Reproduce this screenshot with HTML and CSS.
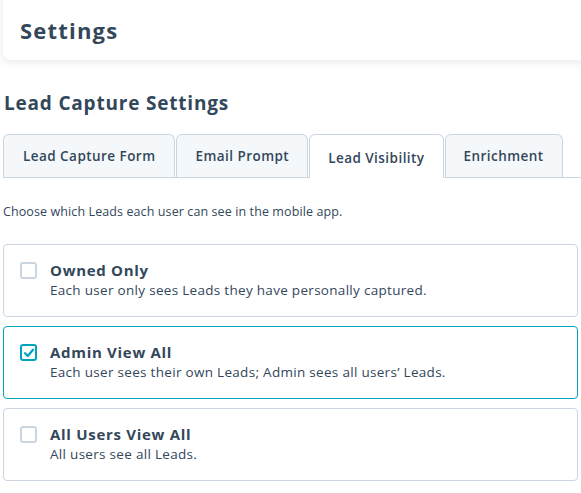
FILE: index.html
```html
<!DOCTYPE html>
<html>
  <head>
    <title>Settings</title>
    <link rel="stylesheet" href="styles.css">
  </head>
  <body>
    <div class="page">
      <header class="page-header">
        <h1>Settings</h1>
      </header>

      <h2 class="section-title">Lead Capture Settings</h2>

      <!-- Tabs -->
      <nav class="tabs">
        <button class="tab">Lead Capture Form</button>
        <button class="tab">Email Prompt</button>
        <button class="tab active">Lead Visibility</button>
        <button class="tab">Enrichment</button>
      </nav>

      <p class="intro">Choose which Leads each user can see in the mobile app.</p>

      <div class="options">
        <label class="option">
          <span class="checkbox"></span>
          <span class="option-text">
            <span class="option-title">Owned Only</span>
            <span class="option-desc">Each user only sees Leads they have personally captured.</span>
          </span>
        </label>
        <label class="option selected">
          <span class="checkbox">
            <svg viewBox="0 0 12 12" width="12" height="12">
              <path d="M2 6.2 L4.8 9 L10 2.8" fill="none" stroke="#00a4bd" stroke-width="2.3" stroke-linecap="round" stroke-linejoin="round" />
            </svg>
          </span>
          <span class="option-text">
            <span class="option-title">Admin View All</span>
            <span class="option-desc">Each user sees their own Leads; Admin sees all users’ Leads.</span>
          </span>
        </label>
        <label class="option">
          <span class="checkbox"></span>
          <span class="option-text">
            <span class="option-title">All Users View All</span>
            <span class="option-desc">All users see all Leads.</span>
          </span>
        </label>
      </div>
    </div>
  </body>
</html>
```

FILE: styles.css
```css
body {
  margin: 0;
  font-family: "Open Sans", "Liberation Sans", sans-serif;
  color: #33475b;
  background: #fff;
  overflow: hidden;
}
.page {
  padding: 0 3px;
}
.page-header {
  background: #fff;
  margin-top: -10px;
  margin-right: -20px;
  height: 70px;
  border-radius: 0 0 0 8px;
  box-shadow: 0 2px 8px rgba(45, 62, 80, 0.12);
  display: flex;
  align-items: flex-end;
  padding: 0 17px 17px;
  box-sizing: border-box;
}
.page-header h1 {
  margin: 0;
  font-size: 22px;
  font-weight: 700;
  line-height: 26px;
  letter-spacing: 1.2px;
}
.section-title {
  margin: 31px 0 0 1px;
  font-size: 19px;
  font-weight: 700;
  line-height: 24px;
  letter-spacing: 0.8px;
}
.tabs {
  display: flex;
  margin: 19px -3px 0 0;
  border-bottom: 1px solid #cbd6e2;
  height: 43px;
}
.tab {
  font-family: inherit;
  font-size: 13.5px;
  font-weight: 600;
  letter-spacing: 0.45px;
  color: #33475b;
  background: #f5f8fa;
  border: 1px solid #cbd6e2;
  border-bottom: none;
  border-radius: 6px 6px 0 0;
  padding: 0 18px;
  height: 43px;
  cursor: pointer;
}
.tab:first-child {
  padding: 0 19px;
}
.tab + .tab {
  margin-left: 1px;
}
.tab.active {
  background: #fff;
  height: 44px;
  padding-top: 2px;
}
.intro {
  margin: 25px 0 0;
  font-size: 12.5px;
  line-height: 18px;
  letter-spacing: 0.1px;
}
.options {
  margin-top: 23px;
  display: flex;
  flex-direction: column;
  gap: 9px;
}
.option {
  display: flex;
  align-items: flex-start;
  gap: 13px;
  border: 1px solid #cbd6e2;
  border-radius: 4px;
  padding: 15px 16px 0;
  height: 73px;
  box-sizing: border-box;
  cursor: pointer;
}
.option.selected {
  border-color: #00a4bd;
}
.checkbox {
  width: 17px;
  height: 17px;
  border: 2px solid #cbd6e2;
  border-radius: 3px;
  box-sizing: border-box;
  margin-top: 2px;
  display: flex;
  align-items: center;
  justify-content: center;
  flex-shrink: 0;
}
.selected .checkbox {
  border-color: #00a4bd;
}
.option-text {
  display: flex;
  flex-direction: column;
}
.option-title {
  font-size: 15px;
  font-weight: 700;
  line-height: 20px;
  letter-spacing: 0.7px;
}
.option-desc {
  font-size: 13.5px;
  line-height: 20px;
  letter-spacing: 0.3px;
}
```
